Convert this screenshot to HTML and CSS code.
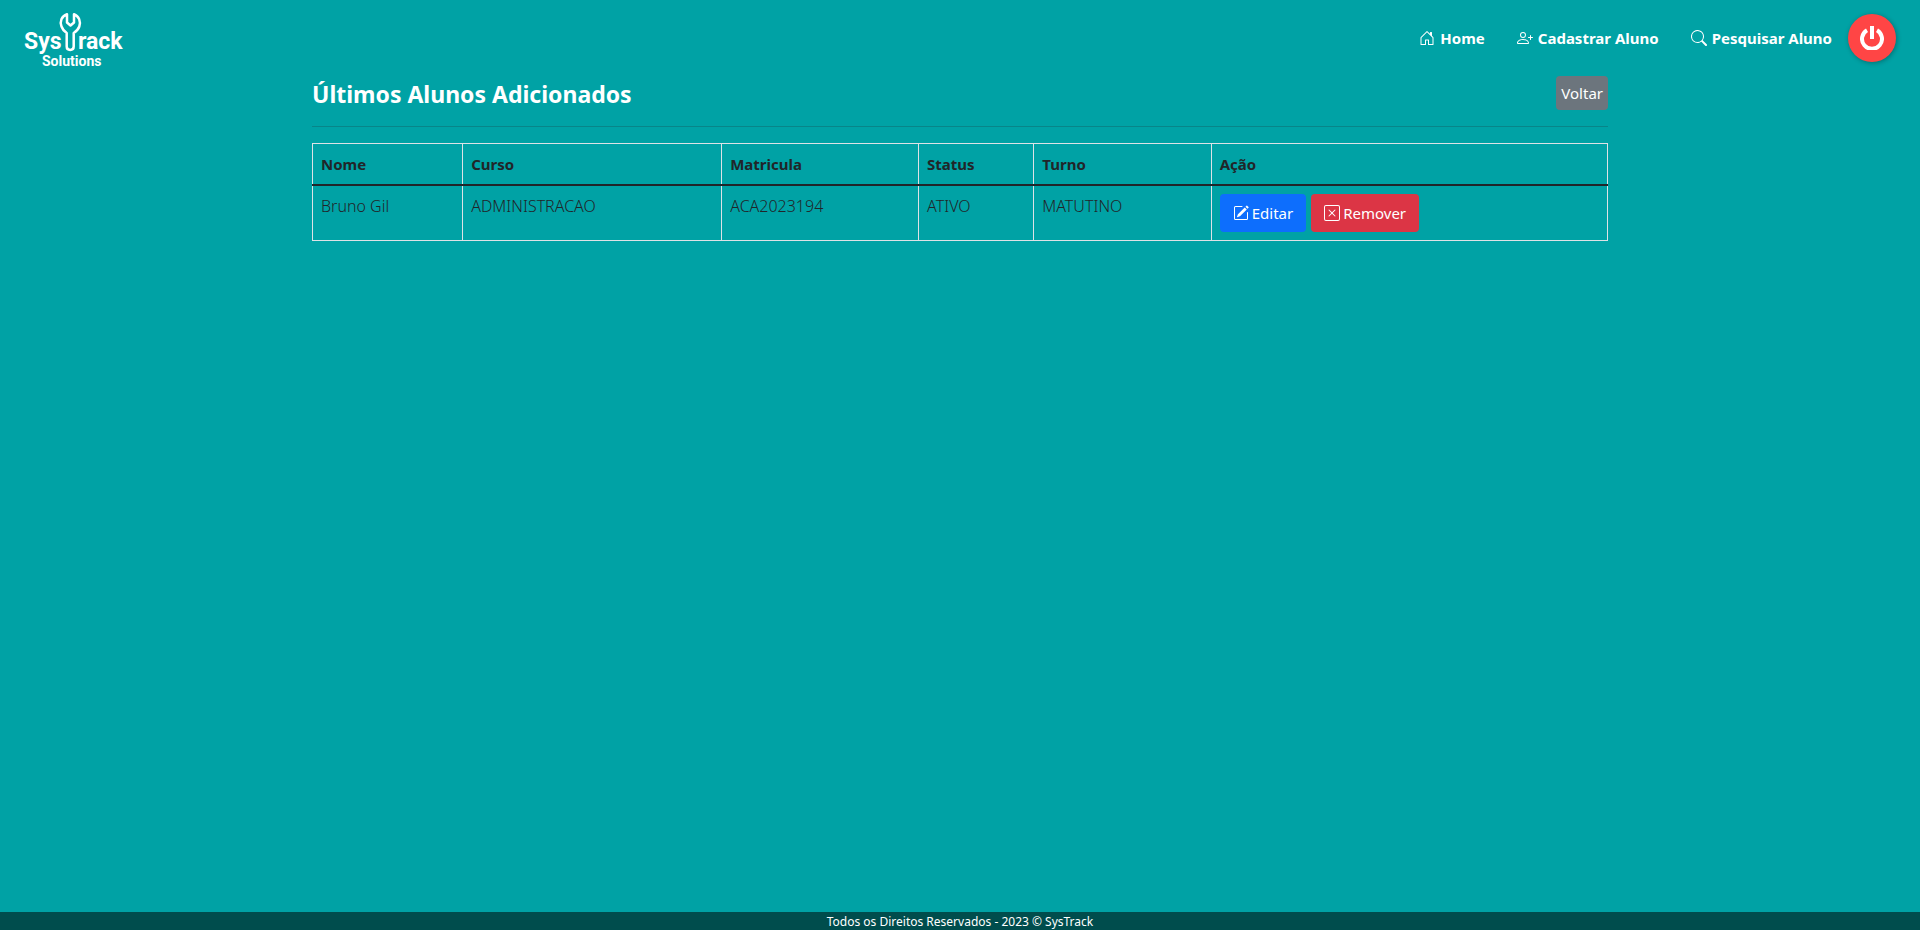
FILE: index.html
```html
<!DOCTYPE html>
<html lang="pt-BR">
<head>
  <meta charset="utf-8">
  <meta name="viewport" content="width=device-width, initial-scale=1">
  <title>SysTrack Solutions</title>
  <link rel="stylesheet" href="styles.css">
</head>
<body>
  <header class="topbar">
    <a class="brand" href="#" aria-label="SysTrack Solutions">
      <svg class="brand-logo" width="106" height="68" viewBox="0 -4 106 68">
        <text class="brand-name" x="0" y="41">Sys</text>
        <text class="brand-name" x="54" y="41">rack</text>
        <text class="brand-sub" x="18" y="58">Solutions</text>
        <path class="brand-wrench" d="M43 6.200C37.500 8 35.500 13.500 37.500 18.500C38.500 21.500 40.500 23.500 42.700 25V38.500C42.700 43 49.700 43 49.700 38.500V25C52 23.500 54.300 21.500 55.300 18.500C57 13.500 55 8 50 6.200V14.500L46.500 17.500L43 14.500Z"/>
      </svg>
    </a>
    <nav class="menu">
      <a class="menu-link" href="#">
        <svg class="icon" viewBox="0 0 16 16"><path d="M8.354 1.146a.5.5 0 0 0-.708 0l-6 6A.5.5 0 0 0 1.500 7.500v7a.5.5 0 0 0 .5.5h4.500a.5.5 0 0 0 .5-.5v-4h2v4a.5.5 0 0 0 .5.5H14a.5.5 0 0 0 .5-.5v-7a.5.5 0 0 0-.146-.354L13 5.793V2.500a.5.5 0 0 0-.5-.5h-1a.5.5 0 0 0-.5.5v1.293L8.354 1.146zM2.500 14V7.707l5.500-5.500 5.500 5.500V14H10v-4a.5.5 0 0 0-.5-.5h-3a.5.5 0 0 0-.5.5v4H2.500z"/></svg>
        Home</a>
      <a class="menu-link" href="#">
        <svg class="icon" viewBox="0 0 16 16"><path d="M6 8a3 3 0 1 0 0-6 3 3 0 0 0 0 6zm2-3a2 2 0 1 1-4 0 2 2 0 0 1 4 0zm4 8c0 1-1 1-1 1H1s-1 0-1-1 1-4 6-4 6 3 6 4zm-1-.004c-.001-.246-.154-.986-.832-1.664C9.516 10.680 8.289 10 6 10c-2.290 0-3.516.68-4.168 1.332-.678.678-.83 1.418-.832 1.664h10z"/><path d="M13.500 5a.5.5 0 0 1 .5.5V7h1.500a.5.5 0 0 1 0 1H14v1.500a.5.5 0 0 1-1 0V8h-1.500a.5.5 0 0 1 0-1H13V5.500a.5.5 0 0 1 .5-.5z"/></svg>
        Cadastrar Aluno</a>
      <a class="menu-link" href="#">
        <svg class="icon" viewBox="0 0 16 16"><path d="M11.742 10.344a6.500 6.500 0 1 0-1.397 1.398h-.001c.03.04.062.078.098.115l3.850 3.850a1 1 0 0 0 1.415-1.414l-3.850-3.850a1.007 1.007 0 0 0-.115-.1zM12 6.500a5.500 5.500 0 1 1-11 0 5.500 5.500 0 0 1 11 0z"/></svg>
        Pesquisar Aluno</a>
      <button class="power" type="button" aria-label="Sair">
        <svg width="24" height="24" viewBox="0 0 24 24"><path class="power-ring" d="M7 4.200A10 10 0 1 0 17 4.200"/><path class="power-bar" d="M12 0V13"/></svg>
      </button>
    </nav>
  </header>

  <main class="container">
    <div class="heading">
      <h1 class="title">Últimos Alunos Adicionados</h1>
      <a class="back" href="#">Voltar</a>
    </div>
    <hr class="rule">
    <table class="students">
      <colgroup>
        <col class="col-nome"><col class="col-curso"><col class="col-matricula"><col class="col-status"><col class="col-turno"><col>
      </colgroup>
      <thead>
        <tr>
          <th scope="col">Nome</th><th scope="col">Curso</th><th scope="col">Matricula</th><th scope="col">Status</th><th scope="col">Turno</th><th scope="col">Ação</th>
        </tr>
      </thead>
      <tbody>
        <tr>
          <td>Bruno Gil</td><td>ADMINISTRACAO</td><td>ACA2023194</td><td>ATIVO</td><td>MATUTINO</td>
          <td>
            <div class="actions">
              <a class="btn btn-edit" href="#">
                <svg class="icon" viewBox="0 0 16 16"><path d="M15.502 1.940a.5.5 0 0 1 0 .706L14.459 3.690l-2-2L13.502.646a.5.5 0 0 1 .707 0l1.293 1.293zm-1.750 2.456-2-2L4.939 9.210a.5.5 0 0 0-.121.196l-.805 2.414a.25.25 0 0 0 .316.316l2.414-.805a.5.5 0 0 0 .196-.12l6.813-6.814z"/><path fill-rule="evenodd" d="M1 13.500A1.500 1.500 0 0 0 2.500 15h11a1.500 1.500 0 0 0 1.500-1.500v-6a.5.5 0 0 0-1 0v6a.5.5 0 0 1-.5.5h-11a.5.5 0 0 1-.5-.5v-11a.5.5 0 0 1 .5-.5H9a.5.5 0 0 0 0-1H2.500A1.500 1.500 0 0 0 1 2.500v11z"/></svg>
                Editar</a>
              <button class="btn btn-remove" type="button">
                <svg class="icon" viewBox="0 0 16 16"><path d="M14 1a1 1 0 0 1 1 1v12a1 1 0 0 1-1 1H2a1 1 0 0 1-1-1V2a1 1 0 0 1 1-1h12zM2 0a2 2 0 0 0-2 2v12a2 2 0 0 0 2 2h12a2 2 0 0 0 2-2V2a2 2 0 0 0-2-2H2z"/><path d="M4.646 4.646a.5.5 0 0 1 .708 0L8 7.293l2.646-2.647a.5.5 0 0 1 .708.708L8.707 8l2.647 2.646a.5.5 0 0 1-.708.708L8 8.707l-2.646 2.647a.5.5 0 0 1-.708-.708L7.293 8 4.646 5.354a.5.5 0 0 1 0-.708z"/></svg>
                Remover</button>
            </div>
          </td>
        </tr>
      </tbody>
    </table>
  </main>

  <footer class="footer">Todos os Direitos Reservados - 2023 © SysTrack</footer>
</body>
</html>
```
FILE: styles.css
```css
* { box-sizing: border-box; }

body {
  margin: 0;
  min-height: 100vh;
  display: flex;
  flex-direction: column;
  background: #00a2a5;
  color: #212529;
  font-family: "Noto Sans", sans-serif;
  font-size: 15px;
  line-height: 24px;
}

a { text-decoration: none; }

.icon {
  width: 16px;
  height: 16px;
  fill: currentColor;
}

.topbar {
  display: flex;
  align-items: center;
  justify-content: space-between;
  height: 76px;
  padding: 0 24px;
}

.brand-logo { display: block; }
.brand-name, .brand-sub {
  fill: #fff;
  font-family: Roboto, sans-serif;
  font-weight: 700;
}
.brand-name { font-size: 23px; }
.brand-sub { font-size: 14px; }
.brand-wrench {
  fill: none;
  stroke: #fff;
  stroke-width: 2.500;
  stroke-linejoin: round;
}

.menu {
  display: flex;
  align-items: center;
}
.menu-link {
  display: flex;
  align-items: center;
  gap: 5px;
  padding: 0 16px;
  color: #fff;
  font-weight: 700;
}
.power {
  display: grid;
  place-items: center;
  width: 48px;
  height: 48px;
  padding: 0;
  border: 0;
  border-radius: 50%;
  background: #ff4545;
  box-shadow: 1px 1px 5px rgba(0, 0, 0, .3);
}
.power-ring, .power-bar {
  fill: none;
  stroke: #fff;
  stroke-width: 4;
}

.container {
  flex: 1;
  width: 100%;
  max-width: 1320px;
  margin: 0 auto;
  padding: 0 12px;
}
.heading {
  display: flex;
  align-items: flex-start;
  justify-content: space-between;
}
.title {
  margin: 0;
  color: #fff;
  font-size: 23px;
  font-weight: 700;
  line-height: 36px;
}
.back {
  padding: 5px;
  border-radius: 4px;
  background: #6c757d;
  color: #fff;
}
.rule {
  margin: 14px 0 16px;
  border: 0;
  border-top: 1px solid #088589;
}

.students {
  width: 100%;
  table-layout: fixed;
  border-collapse: collapse;
}
.students th, .students td {
  padding: 8px;
  border: 1px solid #dee2e6;
  text-align: left;
  vertical-align: top;
}
.students th { font-weight: 700; }
.students td {
  font-size: 16px;
  font-weight: 300;
}
.students thead th { border-bottom: 2px solid #212529; }
.col-nome { width: 11.6%; }
.col-curso { width: 20%; }
.col-matricula { width: 15.2%; }
.col-status { width: 8.9%; }
.col-turno { width: 13.7%; }

.actions {
  display: flex;
  gap: 5px;
}
.btn {
  display: flex;
  align-items: center;
  gap: 3px;
  padding: 7px 13px;
  border: 0;
  border-radius: 4px;
  color: #fff;
  font-family: inherit;
  font-size: 15px;
  font-weight: 400;
  line-height: 24px;
}
.btn-edit { background: #0d6efd; }
.btn-remove { background: #dc3545; }

.footer {
  padding-top: 2px;
  background: #004d4d;
  color: #fff;
  font-size: 12px;
  line-height: 16px;
  text-align: center;
}
```
